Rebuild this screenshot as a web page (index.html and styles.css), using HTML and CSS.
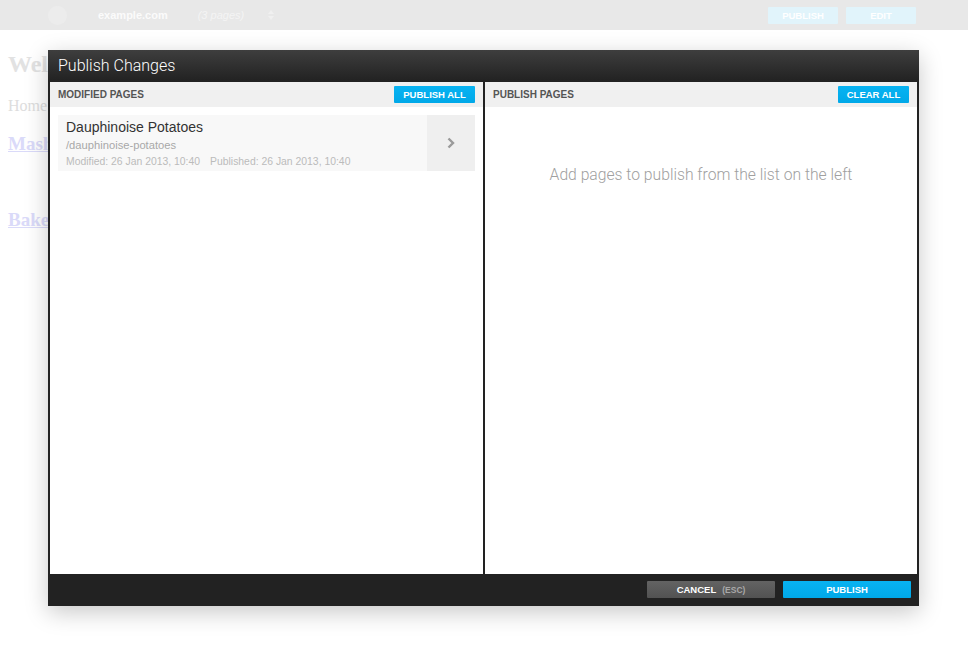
FILE: index.html
```html
<!DOCTYPE html>
<html>
<head>
<meta charset="utf-8">
<title>Publish Changes</title>
<link rel="stylesheet" href="styles.css">
</head>
<body>
<div class="topbar">
  <span class="logo"></span>
  <span class="site">example.com</span>
  <span class="count">(3 pages)</span>
  <svg class="updown" width="10" height="14" viewBox="0 0 10 14"><path d="M5 2 L8 6 H2 Z M5 12 L8 8 H2 Z" fill="#f0f0f0"/></svg>
  <span class="spacer"></span>
  <span class="tb-btn">PUBLISH</span>
  <span class="tb-btn">EDIT</span>
</div>
<div class="page">
  <h1 class="page-title">Welcome</h1>
  <p class="crumb">Home</p>
  <h2 class="page-link"><a href="#">Mashed Potatoes</a></h2>
  <h2 class="page-link lower"><a href="#">Baked Potatoes</a></h2>
</div>

<div class="modal">
  <div class="modal-header">Publish Changes</div>
  <div class="modal-body">
    <section class="panel">
      <div class="panel-head">
        <span class="panel-label">MODIFIED PAGES</span>
        <span class="btn btn-blue btn-small">PUBLISH ALL</span>
      </div>
      <div class="panel-content">
        <div class="item">
          <div class="item-info">
            <div class="item-title">Dauphinoise Potatoes</div>
            <div class="item-path">/dauphinoise-potatoes</div>
            <div class="item-meta"><span>Modified: 26 Jan 2013, 10:40</span><span>Published: 26 Jan 2013, 10:40</span></div>
          </div>
          <div class="item-arrow">
            <svg width="10" height="14" viewBox="0 0 10 14"><path d="M2.5 2.5 L7 7 L2.5 11.5" fill="none" stroke="#9a9a9a" stroke-width="2.4"/></svg>
          </div>
        </div>
      </div>
    </section>
    <section class="panel">
      <div class="panel-head">
        <span class="panel-label">PUBLISH PAGES</span>
        <span class="btn btn-blue btn-small btn-clear">CLEAR ALL</span>
      </div>
      <div class="panel-content empty">
        <p class="empty-text">Add pages to publish from the list on the left</p>
      </div>
    </section>
  </div>
  <div class="modal-footer">
    <span class="btn btn-grey btn-wide">CANCEL <span class="esc">(ESC)</span></span>
    <span class="btn btn-blue btn-wide">PUBLISH</span>
  </div>
</div>
</body>
</html>
```

FILE: styles.css
```css
html, body {
  margin: 0;
  padding: 0;
  background: #fff;
}
body {
  font-family: "Liberation Serif", serif;
  width: 968px;
  height: 656px;
  overflow: hidden;
  position: relative;
}

/* background page (faded) */
.topbar {
  height: 30px;
  background: #e8e8e8;
  display: flex;
  align-items: center;
  padding: 0 52px 0 48px;
  font-family: "Liberation Sans", Arial, sans-serif;
}
.logo {
  width: 19px;
  height: 19px;
  border-radius: 50%;
  background: #ececec;
  margin-right: 31px;
}
.site {
  color: #fbfbfb;
  font-weight: bold;
  font-size: 11px;
  margin-right: 30px;
}
.count {
  color: #f4f4f4;
  font-style: italic;
  font-size: 11px;
  margin-right: 22px;
}
.updown { display: block; }
.spacer { flex: 1; }
.tb-btn {
  width: 70px;
  height: 17px;
  line-height: 17px;
  background: #e1f4fb;
  color: #fff;
  font-weight: bold;
  font-size: 9.5px;
  text-align: center;
  border-radius: 1px;
  margin-left: 8px;
}
.page {
  padding: 0 8px;
}
.page-title {
  margin: 20px 0 0;
  font-size: 24px;
  line-height: 28px;
  color: #e2e2e2;
}
.crumb {
  margin: 18px 0 0;
  font-size: 16px;
  line-height: 20px;
  color: #dddddd;
}
.page-link {
  margin: 17px 0 0;
  font-size: 19px;
  line-height: 22px;
}
.page-link.lower { margin-top: 54px; }
.page-link a { color: #dadaf9; }

/* modal */
.modal {
  position: absolute;
  left: 48px;
  top: 50px;
  width: 871px;
  height: 556px;
  background: #222;
  box-shadow: 0 6px 22px rgba(0,0,0,0.22);
  display: flex;
  flex-direction: column;
  font-family: "Liberation Sans", Arial, sans-serif;
}
.modal-header {
  height: 31px;
  line-height: 31px;
  padding: 0 10px;
  background: linear-gradient(#3e3e3e, #222);
  color: #fff;
  font-family: Roboto, "Liberation Sans", sans-serif;
  font-weight: 300;
  font-size: 16px;
}
.modal-body {
  flex: 1;
  display: grid;
  grid-template-columns: 433px 432px;
  gap: 2px;
  padding: 1px 2px 0;
  min-height: 0;
}
.panel {
  background: #fff;
  display: flex;
  flex-direction: column;
}
.panel-head {
  height: 25px;
  background: #f0f0f0;
  display: flex;
  align-items: center;
  justify-content: space-between;
  padding: 0 8px;
}
.panel-label {
  font-size: 10px;
  font-weight: bold;
  color: #555;
}
.btn {
  display: inline-flex;
  align-items: center;
  justify-content: center;
  height: 17px;
  color: #fff;
  font-weight: bold;
  font-size: 9.5px;
  border-radius: 1px;
}
.btn-blue {
  background: linear-gradient(#08b3f2, #00a8e8);
}
.btn-small { width: 81px; }
.btn-clear { width: 71px; }
.btn-grey {
  background: linear-gradient(#636363, #525252);
}
.btn-wide { width: 128px; }
.esc {
  color: #a8a8a8;
  font-weight: bold;
  margin-left: 6px;
  font-size: 8.5px;
}
.panel-content {
  flex: 1;
  padding: 8px;
}
.item {
  display: flex;
  height: 56px;
  background: #f8f8f8;
}
.item-info {
  flex: 1;
  padding: 4px 8px 0;
}
.item-title {
  font-size: 14px;
  line-height: 17px;
  color: #333;
}
.item-path {
  font-size: 11.2px;
  line-height: 18px;
  color: #a8a8a8;
}
.item-meta {
  font-size: 10.4px;
  line-height: 16px;
  color: #bbb;
  display: flex;
  gap: 10px;
}
.item-arrow {
  width: 48px;
  background: #efefef;
  display: flex;
  align-items: center;
  justify-content: center;
}
.item-arrow svg { display: block; }
.empty {
  display: flex;
  justify-content: center;
}
.empty-text {
  margin: 51px 0 0;
  font-family: Roboto, "Liberation Sans", sans-serif;
  font-size: 15.7px;
  line-height: 18px;
  color: #a0a0a0;
  font-weight: 300;
}
.modal-footer {
  height: 32px;
  display: flex;
  align-items: flex-start;
  justify-content: flex-end;
  gap: 8px;
  padding: 7px 8px 0;
  box-sizing: border-box;
  background: #222;
}
```
